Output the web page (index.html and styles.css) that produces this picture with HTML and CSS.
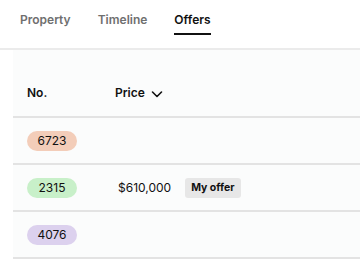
FILE: index.html
```html
<html>
<head>
  <link rel="stylesheet" href="styles.css">
</head>
<body>
  <nav class="tabs">
    <a class="tab">Property</a>
    <a class="tab">Timeline</a>
    <a class="tab active">Offers</a>
  </nav>

  <div class="offers">
    <div class="row head">
      <div class="col-no">No.</div>
      <div class="col-price">Price
        <svg class="chevron" width="12" height="12" viewBox="0 0 12 12"><path d="M1.5 4 L6 8.5 L10.5 4" fill="none" stroke="#111" stroke-width="1.6" stroke-linecap="round" stroke-linejoin="round"/></svg>
      </div>
    </div>
    <div class="row">
      <div class="col-no"><span class="pill peach">6723</span></div>
      <div class="col-price"></div>
    </div>
    <div class="row">
      <div class="col-no"><span class="pill green">2315</span></div>
      <div class="col-price"><span class="amount">$610,000</span><span class="badge">My offer</span></div>
    </div>
    <div class="row">
      <div class="col-no"><span class="pill purple">4076</span></div>
      <div class="col-price"></div>
    </div>
  </div>
</body>
</html>
```

FILE: styles.css
```css
body {
  margin: 0;
  font-family: Inter, "Noto Sans", sans-serif;
  color: #111;
  background: #fff;
}
.tabs {
  display: flex;
  gap: 27px;
  padding: 0 20px;
  height: 48px;
  border-bottom: 2px solid #ebebeb;
}
.tab {
  font-size: 12px;
  font-weight: 600;
  line-height: 15px;
  color: #6f6f6f;
  padding-top: 12px;
  height: 21px;
  border-bottom: 2px solid transparent;
}
.tab.active {
  color: #111;
  border-bottom-color: #111;
}
.offers {
  margin-left: 13px;
  background: #fbfcfc;
}
.row {
  display: flex;
  align-items: center;
  height: 45px;
  border-bottom: 2px solid #e3e3e3;
}
.row.head {
  height: 68px;
  align-items: flex-end;
  box-sizing: border-box;
  padding-bottom: 15px;
  font-size: 12px;
  font-weight: 600;
  line-height: 16px;
}
.col-no {
  width: 88px;
  padding-left: 14px;
}
.col-price {
  display: flex;
  align-items: center;
  gap: 14px;
}
.head .col-price {
  gap: 6px;
}
.chevron {
  margin-top: 1px;
}
.pill {
  display: inline-block;
  width: 50px;
  height: 20px;
  line-height: 20px;
  border-radius: 10px;
  text-align: center;
  font-size: 12px;
}
.peach { background: #f3cdb9; }
.green { background: #c8f0c9; }
.purple { background: #dcd1ee; }
.amount {
  font-size: 12px;
  margin-left: 3px;
}
.badge {
  background: #e7e7e7;
  border-radius: 3px;
  font-size: 10.5px;
  font-weight: 700;
  padding: 0 6px;
  height: 20px;
  line-height: 20px;
}
```
